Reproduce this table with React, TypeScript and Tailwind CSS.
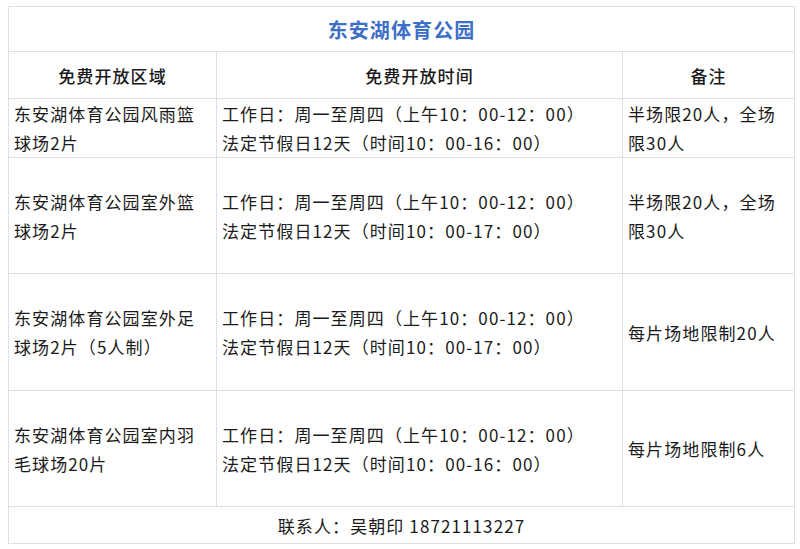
import * as React from "react";

// Free-opening schedule table for 东安湖体育公园

type Row = {
  area: string;
  weekday: string;
  holiday: string;
  note: string;
  height: string;
};

const rows: Row[] = [
  {
    area: "东安湖体育公园风雨篮球场2片",
    weekday: "工作日：周一至周四（上午10：00-12：00）",
    holiday: "法定节假日12天（时间10：00-16：00）",
    note: "半场限20人，全场限30人",
    height: "h-[56px]",
  },
  {
    area: "东安湖体育公园室外篮球场2片",
    weekday: "工作日：周一至周四（上午10：00-12：00）",
    holiday: "法定节假日12天（时间10：00-17：00）",
    note: "半场限20人，全场限30人",
    height: "h-[116px]",
  },
  {
    area: "东安湖体育公园室外足球场2片（5人制）",
    weekday: "工作日：周一至周四（上午10：00-12：00）",
    holiday: "法定节假日12天（时间10：00-17：00）",
    note: "每片场地限制20人",
    height: "h-[117px]",
  },
  {
    area: "东安湖体育公园室内羽毛球场20片",
    weekday: "工作日：周一至周四（上午10：00-12：00）",
    holiday: "法定节假日12天（时间10：00-16：00）",
    note: "每片场地限制6人",
    height: "h-[116px]",
  },
];

const cell = "border border-[#dfdfe8] px-[5px] align-middle";

export default function App() {
  return (
    <div
      className="w-[800px] h-[549px] bg-white pl-[8px] pt-[6px] text-[17px] leading-[29px] text-[#1a1a1a] tracking-[1.1px]"
      style={{ fontFamily: '"Noto Sans CJK SC", "Noto Sans", sans-serif' }}
    >
      <table className="table-fixed border-collapse w-[786px]">
        <colgroup>
          <col className="w-[208px]" />
          <col className="w-[406px]" />
          <col className="w-[172px]" />
        </colgroup>
        <tbody>
          {/* Title */}
          <tr className="h-[45px]">
            <td colSpan={3} className={`${cell} text-center text-[20px] font-bold text-[#3d6fc6]`}>
              东安湖体育公园
            </td>
          </tr>

          {/* Header */}
          <tr className="h-[47px]">
            <td className={`${cell} text-center font-medium`}>免费开放区域</td>
            <td className={`${cell} text-center font-medium`}>免费开放时间</td>
            <td className={`${cell} text-center font-medium`}>备注</td>
          </tr>

          {rows.map((r) => (
            <tr key={r.area} className={r.height}>
              <td className={cell}>{r.area}</td>
              <td className={cell}>
                <div>{r.weekday}</div>
                <div>{r.holiday}</div>
              </td>
              <td className={cell}>{r.note}</td>
            </tr>
          ))}

          {/* Contact */}
          <tr className="h-[37px]">
            <td colSpan={3} className={`${cell} text-center`}>
              联系人：吴朝印 18721113227
            </td>
          </tr>
        </tbody>
      </table>
    </div>
  );
}
